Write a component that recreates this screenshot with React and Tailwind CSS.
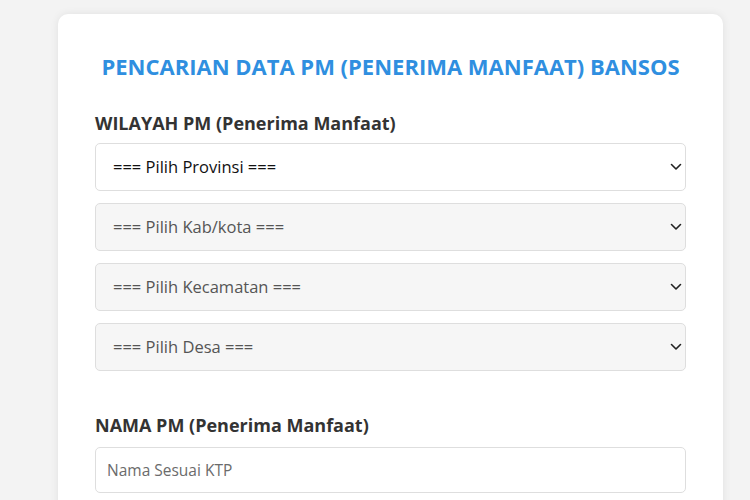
import React from "react";

const Chevron = () => (
  <svg
    className="pointer-events-none absolute right-[4px] top-1/2 -translate-y-1/2"
    width="12"
    height="8"
    viewBox="0 0 12 8"
    fill="none"
  >
    <path d="M1.5 1.5 L6 6 L10.5 1.5" stroke="#222" strokeWidth="1.6" strokeLinecap="round" strokeLinejoin="round" />
  </svg>
);

const Select = ({ label, disabled }) => (
  <div className="relative">
    <select
      disabled={disabled}
      className={
        "h-12 w-full appearance-none rounded-[5px] border border-[#dedede] pl-[17px] pr-8 text-[16.5px] outline-none " +
        (disabled ? "bg-[#f6f6f6] text-[#555]" : "bg-white text-[#111]")
      }
    >
      <option>{label}</option>
    </select>
    <span className="pointer-events-none absolute right-0 top-0 h-full w-[14px]">
      <Chevron />
    </span>
  </div>
);

const App = () => {
  return (
    <div
      className="h-[500px] overflow-hidden bg-[#f3f3f3] pl-[58px] pr-[27px] pt-[14px]"
      style={{ fontFamily: '"Open Sans", "Noto Sans", sans-serif' }}
    >
      <div className="h-[600px] rounded-[10px] bg-white px-[37px] pt-[37px] shadow-[0_0_8px_rgba(0,0,0,0.08)]">
        <h1 className="text-center text-[22px] font-bold leading-[30px] text-[#2f8fe0]">
          PENCARIAN DATA PM (PENERIMA MANFAAT) BANSOS
        </h1>

        <h2 className="mt-[29px] text-[18px] font-bold leading-[26px] text-[#333]">
          WILAYAH PM (Penerima Manfaat)
        </h2>
        <div className="mt-[7px] flex flex-col gap-3">
          <Select label="=== Pilih Provinsi ===" />
          <Select label="=== Pilih Kab/kota ===" disabled />
          <Select label="=== Pilih Kecamatan ===" disabled />
          <Select label="=== Pilih Desa ===" disabled />
        </div>

        <h2 className="mt-[41px] text-[18px] font-bold leading-[26px] text-[#333]">
          NAMA PM (Penerima Manfaat)
        </h2>
        <input
          type="text"
          placeholder="Nama Sesuai KTP"
          className="mt-[9px] h-[46px] w-full rounded-[5px] border border-[#dedede] bg-white px-[11px] text-[15.5px] text-[#111] outline-none placeholder:text-[#6b6b6b]"
        />
      </div>
    </div>
  );
};

export default App;
